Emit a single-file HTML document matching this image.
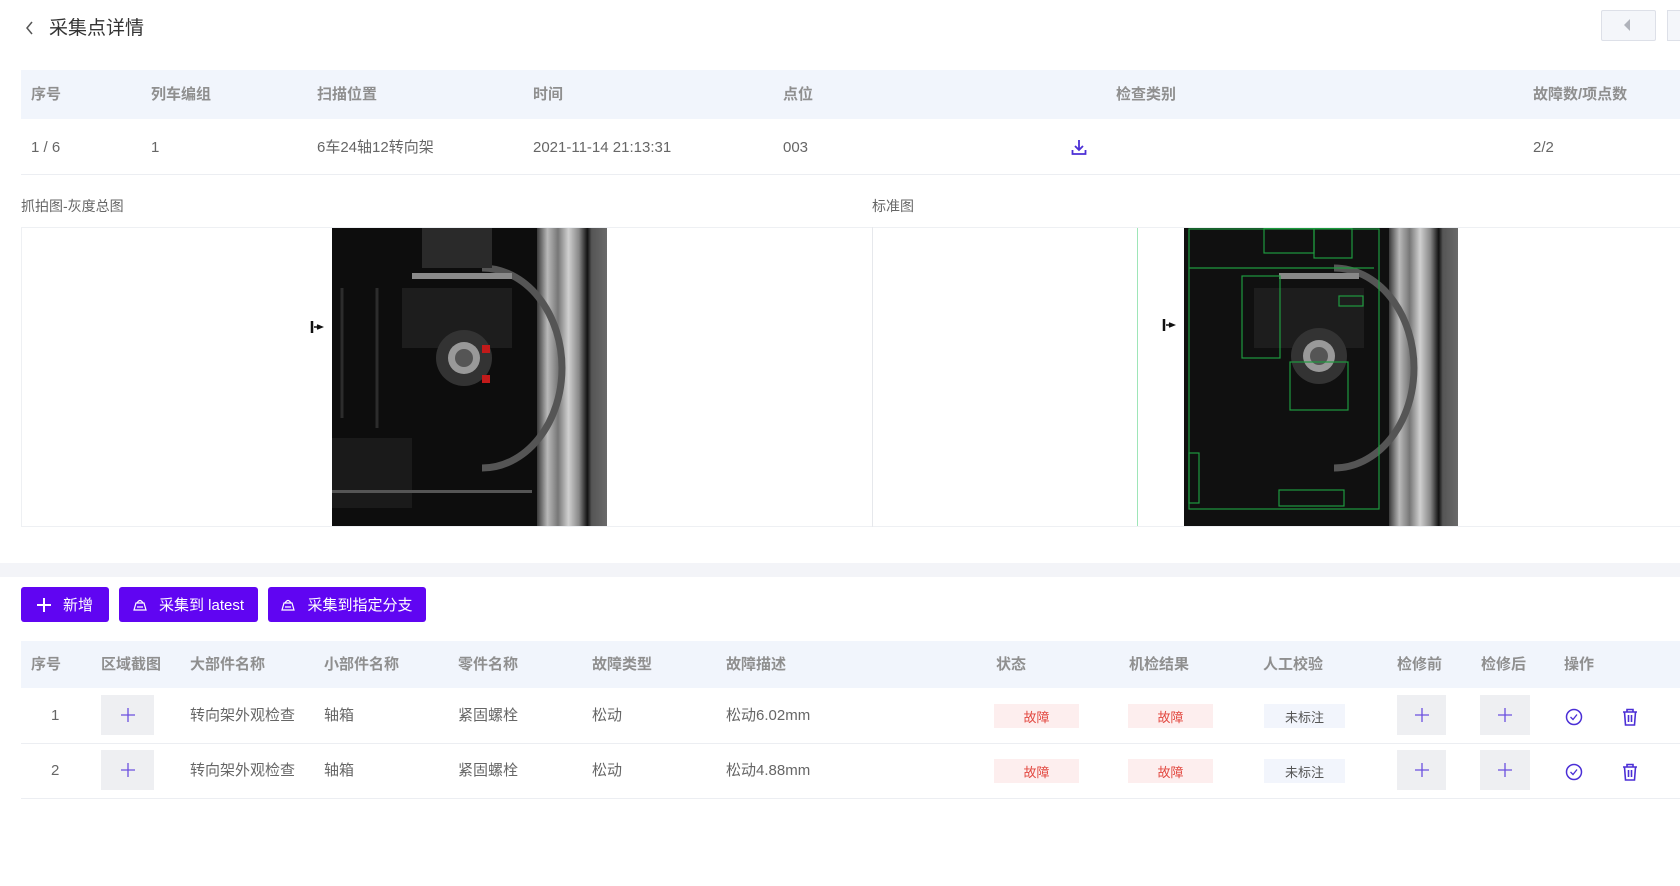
<!DOCTYPE html>
<html><head><meta charset="utf-8">
<style>
*{box-sizing:border-box;margin:0;padding:0}
body{width:1680px;height:886px;background:#fff;font-family:"Liberation Sans","Noto Sans CJK SC",sans-serif;position:relative;overflow:hidden;color:#666}
.a{position:absolute;white-space:nowrap;line-height:20px}
.th{font-size:15px;color:#8f8f8f;font-weight:bold}
.td{font-size:15px;color:#666}
.btn{position:absolute;top:587px;height:35px;background:#6005f2;color:#fff;font-size:15px;border-radius:3px;display:flex;align-items:center;justify-content:center;gap:12px}
.tag{position:absolute;height:24px;font-size:13px;display:flex;align-items:center;justify-content:center}
.red{background:#fdeeee;color:#e2473f}
.gr{background:#f2f5fc;color:#555}
.box{position:absolute;background:#eeeff2;display:flex;align-items:center;justify-content:center}
</style></head><body>
<svg class="a" style="left:24px;top:20px" width="12" height="16"><path d="M8 2 L3 8 L8 14" stroke="#555" stroke-width="1.5" fill="none"/></svg>
<div class="a" style="left:49px;top:17px;font-size:19px;color:#333;line-height:24px">采集点详情</div>
<div class="a" style="left:1601px;top:10px;width:55px;height:31px;border:1px solid #dde0e8;background:#f4f6fa;border-radius:2px"></div>
<svg class="a" style="left:1622px;top:18px" width="10" height="14"><path d="M8 1 L2 7 L8 13Z" fill="#b0b3bb"/></svg>
<div class="a" style="left:1667px;top:10px;width:20px;height:31px;border:1px solid #dde0e8;background:#f4f6fa"></div>

<div class="a" style="left:21px;top:70px;width:1659px;height:49px;background:#f1f5fc"></div>
<div class="a th" style="left:31px;top:85px">序号</div>
<div class="a th" style="left:151px;top:85px">列车编组</div>
<div class="a th" style="left:317px;top:85px">扫描位置</div>
<div class="a th" style="left:533px;top:85px">时间</div>
<div class="a th" style="left:783px;top:85px">点位</div>
<div class="a th" style="left:1116px;top:85px">检查类别</div>
<div class="a th" style="left:1533px;top:85px">故障数/项点数</div>
<div class="a td" style="left:31px;top:138px">1 / 6</div>
<div class="a td" style="left:151px;top:138px">1</div>
<div class="a td" style="left:317px;top:138px">6车24轴12转向架</div>
<div class="a td" style="left:533px;top:138px">2021-11-14 21:13:31</div>
<div class="a td" style="left:783px;top:138px">003</div>
<svg class="a" style="left:1071px;top:139px" width="16" height="17"><path d="M8 1 V11 M4 7 L8 11 L12 7 M1.5 11 V15 H14.5 V11" stroke="#4b2fd6" stroke-width="1.8" fill="none"/></svg>
<div class="a td" style="left:1533px;top:138px">2/2</div>
<div class="a" style="left:21px;top:174px;width:1659px;height:1px;background:#eceef2"></div>

<div class="a" style="left:21px;top:196px;font-size:14px;color:#666">抓拍图-灰度总图</div>
<div class="a" style="left:872px;top:196px;font-size:14px;color:#666">标准图</div>
<div class="a" style="left:21px;top:227px;width:1659px;height:1px;background:#eef0f3"></div>
<div class="a" style="left:21px;top:526px;width:1659px;height:1px;background:#eef0f3"></div>
<div class="a" style="left:21px;top:227px;width:1px;height:300px;background:#eef0f3"></div>
<div class="a" style="left:872px;top:227px;width:1px;height:300px;background:#e6e8ec"></div>
<div class="a" style="left:1137px;top:228px;width:1px;height:298px;background:#9ee6b8"></div>

<svg class="a" style="left:310px;top:320px" width="14" height="14"><path d="M2 1V13" stroke="#111" stroke-width="2.5"/><path d="M4 7H12M7 5L12 7L7 9" fill="#111" stroke="#111" stroke-width="1.5"/></svg>
<svg class="a" style="left:1162px;top:318px" width="14" height="14"><path d="M2 1V13" stroke="#111" stroke-width="2.5"/><path d="M4 7H12M7 5L12 7L7 9" fill="#111" stroke="#111" stroke-width="1.5"/></svg>

<svg class="a" style="left:332px;top:228px" width="275" height="298">
<defs><linearGradient id="st" x1="0" x2="1"><stop offset="0" stop-color="#3a3a3a"/><stop offset=".15" stop-color="#b9b9b9"/><stop offset=".3" stop-color="#777"/><stop offset=".45" stop-color="#d0d0d0"/><stop offset=".6" stop-color="#888"/><stop offset=".72" stop-color="#111"/><stop offset=".78" stop-color="#555"/><stop offset="1" stop-color="#6a6a6a"/></linearGradient></defs>
<rect width="275" height="298" fill="#0d0d0d"/>
<rect x="205" width="70" height="298" fill="url(#st)"/>
<path d="M150 40 A80 100 0 0 1 150 240" fill="none" stroke="#555" stroke-width="7"/>
<rect x="70" y="60" width="110" height="60" fill="#1d1d1d"/>
<rect x="80" y="45" width="100" height="6" fill="#8a8a8a"/>
<circle cx="132" cy="130" r="28" fill="#333"/><circle cx="132" cy="130" r="16" fill="#999"/><circle cx="132" cy="130" r="9" fill="#555"/>
<rect x="90" y="0" width="70" height="40" fill="#2a2a2a"/>
<rect x="0" y="210" width="80" height="70" fill="#1a1a1a"/>
<rect x="0" y="262" width="200" height="3" fill="#555"/>
<rect x="150" y="117" width="8" height="8" fill="#c21a1a"/><rect x="150" y="147" width="8" height="8" fill="#c21a1a"/>
<path d="M45 60 V200 M10 60 V190" stroke="#2c2c2c" stroke-width="3"/>
</svg>

<svg class="a" style="left:1184px;top:228px" width="274" height="298">
<rect width="274" height="298" fill="#101010"/>
<rect x="205" width="69" height="298" fill="url(#st)"/>
<path d="M150 40 A80 100 0 0 1 150 240" fill="none" stroke="#555" stroke-width="7"/>
<rect x="70" y="60" width="110" height="60" fill="#1d1d1d"/>
<rect x="95" y="45" width="80" height="6" fill="#888"/>
<circle cx="135" cy="128" r="28" fill="#333"/><circle cx="135" cy="128" r="16" fill="#999"/><circle cx="135" cy="128" r="9" fill="#555"/>
<g fill="none" stroke="#1f9a3f" stroke-width="1.2">
<rect x="5" y="1" width="190" height="280"/>
<path d="M5 40H190"/>
<rect x="58" y="48" width="38" height="82"/>
<rect x="106" y="134" width="58" height="48"/>
<rect x="80" y="0" width="50" height="25"/><rect x="130" y="0" width="38" height="30"/>
<rect x="155" y="68" width="24" height="10"/>
<rect x="5" y="225" width="10" height="50"/>
<rect x="95" y="262" width="65" height="16"/>
</g>
</svg>

<div class="a" style="left:0;top:563px;width:1680px;height:14px;background:#f3f4f8"></div>

<div class="btn" style="left:21px;width:88px"><svg width="14" height="14"><path d="M7 0V14M0 7H14" stroke="#fff" stroke-width="2"/></svg>新增</div>
<div class="btn" style="left:119px;width:139px"><svg width="14" height="13"><path d="M1 12H13L11 5H3Z M4 5 Q7 0 10 5 M4 9H10" stroke="#fff" stroke-width="1.2" fill="none"/></svg>采集到 latest</div>
<div class="btn" style="left:268px;width:158px"><svg width="14" height="13"><path d="M1 12H13L11 5H3Z M4 5 Q7 0 10 5 M4 9H10" stroke="#fff" stroke-width="1.2" fill="none"/></svg>采集到指定分支</div>

<div class="a" style="left:21px;top:641px;width:1659px;height:47px;background:#f1f5fc"></div>
<div class="a th" style="left:31px;top:655px">序号</div>
<div class="a th" style="left:101px;top:655px">区域截图</div>
<div class="a th" style="left:190px;top:655px">大部件名称</div>
<div class="a th" style="left:324px;top:655px">小部件名称</div>
<div class="a th" style="left:458px;top:655px">零件名称</div>
<div class="a th" style="left:592px;top:655px">故障类型</div>
<div class="a th" style="left:726px;top:655px">故障描述</div>
<div class="a th" style="left:996px;top:655px">状态</div>
<div class="a th" style="left:1129px;top:655px">机检结果</div>
<div class="a th" style="left:1263px;top:655px">人工校验</div>
<div class="a th" style="left:1397px;top:655px">检修前</div>
<div class="a th" style="left:1481px;top:655px">检修后</div>
<div class="a th" style="left:1564px;top:655px">操作</div>

<div class="a td" style="left:51px;top:706px">1</div>
<div class="box" style="left:101px;top:695px;width:53px;height:40px"><svg width="16" height="16"><path d="M8 1V15M1 8H15" stroke="#6b4fe0" stroke-width="1.3"/></svg></div>
<div class="a td" style="left:190px;top:706px">转向架外观检查</div>
<div class="a td" style="left:324px;top:706px">轴箱</div>
<div class="a td" style="left:458px;top:706px">紧固螺栓</div>
<div class="a td" style="left:592px;top:706px">松动</div>
<div class="a td" style="left:726px;top:706px">松动6.02mm</div>
<div class="tag red" style="left:994px;top:704px;width:85px">故障</div>
<div class="tag red" style="left:1128px;top:704px;width:85px">故障</div>
<div class="tag gr" style="left:1264px;top:704px;width:81px">未标注</div>
<div class="box" style="left:1397px;top:695px;width:49px;height:40px"><svg width="16" height="16"><path d="M8 1V15M1 8H15" stroke="#6b4fe0" stroke-width="1.3"/></svg></div>
<div class="box" style="left:1480px;top:695px;width:50px;height:40px"><svg width="16" height="16"><path d="M8 1V15M1 8H15" stroke="#6b4fe0" stroke-width="1.3"/></svg></div>
<svg class="a" style="left:1565px;top:708px" width="18" height="18"><circle cx="9" cy="9" r="7.5" stroke="#4b2fd6" stroke-width="1.5" fill="none"/><path d="M5.5 9L8 11.5L12 6.5" stroke="#4b2fd6" stroke-width="1.3" fill="none"/></svg>
<svg class="a" style="left:1622px;top:708px" width="16" height="18"><path d="M1 4H15M5 4V1.5H11V4M2.5 4L3.5 17H12.5L13.5 4M6.5 7V14M9.5 7V14" stroke="#4b2fd6" stroke-width="1.6" fill="none"/></svg>
<div class="a" style="left:21px;top:743px;width:1659px;height:1px;background:#eceef2"></div>

<div class="a td" style="left:51px;top:761px">2</div>
<div class="box" style="left:101px;top:750px;width:53px;height:40px"><svg width="16" height="16"><path d="M8 1V15M1 8H15" stroke="#6b4fe0" stroke-width="1.3"/></svg></div>
<div class="a td" style="left:190px;top:761px">转向架外观检查</div>
<div class="a td" style="left:324px;top:761px">轴箱</div>
<div class="a td" style="left:458px;top:761px">紧固螺栓</div>
<div class="a td" style="left:592px;top:761px">松动</div>
<div class="a td" style="left:726px;top:761px">松动4.88mm</div>
<div class="tag red" style="left:994px;top:759px;width:85px">故障</div>
<div class="tag red" style="left:1128px;top:759px;width:85px">故障</div>
<div class="tag gr" style="left:1264px;top:759px;width:81px">未标注</div>
<div class="box" style="left:1397px;top:750px;width:49px;height:40px"><svg width="16" height="16"><path d="M8 1V15M1 8H15" stroke="#6b4fe0" stroke-width="1.3"/></svg></div>
<div class="box" style="left:1480px;top:750px;width:50px;height:40px"><svg width="16" height="16"><path d="M8 1V15M1 8H15" stroke="#6b4fe0" stroke-width="1.3"/></svg></div>
<svg class="a" style="left:1565px;top:763px" width="18" height="18"><circle cx="9" cy="9" r="7.5" stroke="#4b2fd6" stroke-width="1.5" fill="none"/><path d="M5.5 9L8 11.5L12 6.5" stroke="#4b2fd6" stroke-width="1.3" fill="none"/></svg>
<svg class="a" style="left:1622px;top:763px" width="16" height="18"><path d="M1 4H15M5 4V1.5H11V4M2.5 4L3.5 17H12.5L13.5 4M6.5 7V14M9.5 7V14" stroke="#4b2fd6" stroke-width="1.6" fill="none"/></svg>
<div class="a" style="left:21px;top:798px;width:1659px;height:1px;background:#eceef2"></div>
</body></html>
